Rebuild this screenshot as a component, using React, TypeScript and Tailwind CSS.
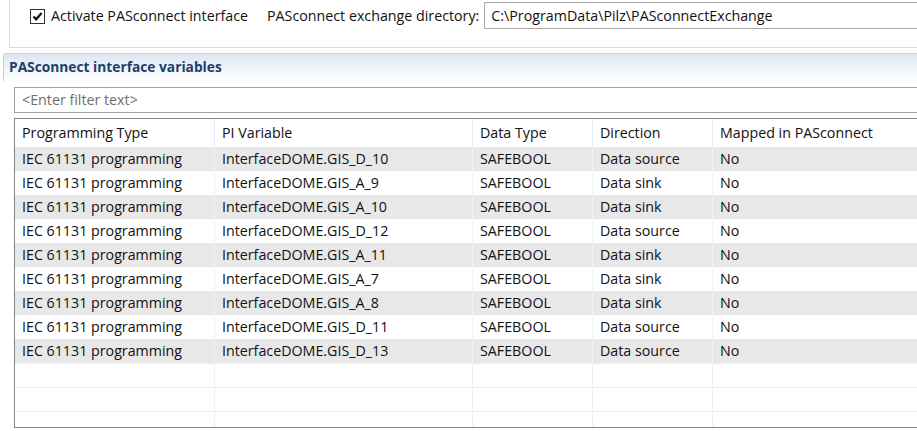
import React from "react";

type Row = {
  kind: string;
  variable: string;
  dataType: string;
  direction: string;
  mapped: string;
};

const rows: Row[] = [
  { kind: "IEC 61131 programming", variable: "InterfaceDOME.GIS_D_10", dataType: "SAFEBOOL", direction: "Data source", mapped: "No" },
  { kind: "IEC 61131 programming", variable: "InterfaceDOME.GIS_A_9", dataType: "SAFEBOOL", direction: "Data sink", mapped: "No" },
  { kind: "IEC 61131 programming", variable: "InterfaceDOME.GIS_A_10", dataType: "SAFEBOOL", direction: "Data sink", mapped: "No" },
  { kind: "IEC 61131 programming", variable: "InterfaceDOME.GIS_D_12", dataType: "SAFEBOOL", direction: "Data source", mapped: "No" },
  { kind: "IEC 61131 programming", variable: "InterfaceDOME.GIS_A_11", dataType: "SAFEBOOL", direction: "Data sink", mapped: "No" },
  { kind: "IEC 61131 programming", variable: "InterfaceDOME.GIS_A_7", dataType: "SAFEBOOL", direction: "Data sink", mapped: "No" },
  { kind: "IEC 61131 programming", variable: "InterfaceDOME.GIS_A_8", dataType: "SAFEBOOL", direction: "Data sink", mapped: "No" },
  { kind: "IEC 61131 programming", variable: "InterfaceDOME.GIS_D_11", dataType: "SAFEBOOL", direction: "Data source", mapped: "No" },
  { kind: "IEC 61131 programming", variable: "InterfaceDOME.GIS_D_13", dataType: "SAFEBOOL", direction: "Data source", mapped: "No" },
];

const headers = ["Programming Type", "PI Variable", "Data Type", "Direction", "Mapped in PASconnect"];

// column widths in px (last one fills)
const colClass = ["w-[200px]", "w-[258px]", "w-[120px]", "w-[120px]", "flex-1"];

const Checkbox: React.FC = () => (
  <div className="w-[15px] h-[15px] border border-[#333] bg-white flex items-center justify-center">
    <svg width="11" height="11" viewBox="0 0 11 11">
      <path d="M1.5 5.5 L4.2 8.3 L9.5 2" fill="none" stroke="#111" strokeWidth="2.2" />
    </svg>
  </div>
);

const App: React.FC = () => {
  return (
    <div
      className="w-[917px] h-[431px] overflow-hidden bg-white text-[14.25px] text-[#111]"
      style={{ fontFamily: '"Open Sans", "Noto Sans", sans-serif' }}
    >
      <div className="w-[940px]">
        {/* top settings panel */}
        <div className="ml-[9px] h-[48px] border-l border-b border-[#dadada] flex items-start">
          <div className="flex items-center gap-[6px] ml-[20px] mt-[8px]">
            <Checkbox />
            <span className="leading-[16px]">Activate PASconnect interface</span>
          </div>
          <span className="ml-[19px] mt-[7px] leading-[18px]">PASconnect exchange directory:</span>
          <div className="ml-[5px] mt-[2px] h-[27px] flex-1 border border-[#a9a9a9] flex items-center pl-[6px]">
            C:\ProgramData\Pilz\PASconnectExchange
          </div>
        </div>

        {/* section header */}
        <div className="mt-[5px] ml-[3px] h-[28px] rounded-tl-[3px] border-t border-l border-[#c8d0da] bg-gradient-to-b from-[#dde6f1] to-white flex items-center pl-[5px]">
          <span className="font-bold text-[#1d3f6b] text-[13.75px]">PASconnect interface variables</span>
        </div>

        {/* filter */}
        <div className="mt-[6px] ml-[14px] h-[26px] border border-[#a3a3a3] flex items-center pl-[7px] text-[#6e6e6e]">
          &lt;Enter filter text&gt;
        </div>

        {/* table */}
        <div className="mt-[5px] ml-[14px] h-[310px] border-t border-l border-b border-[#82868c] overflow-hidden">
          <div className="h-[28px] flex bg-white">
            {headers.map((h, i) => (
              <div
                key={h}
                className={`${colClass[i]} h-full flex items-center pl-[7px] ${i < 4 ? "border-r border-[#e3e9f0]" : ""}`}
              >
                {h}
              </div>
            ))}
          </div>
          {rows.map((r, ri) => (
            <div key={ri} className={`h-[24px] flex ${ri % 2 === 0 ? "bg-[#e8e8e8]" : "bg-white"}`}>
              {[r.kind, r.variable, r.dataType, r.direction, r.mapped].map((c, i) => (
                <div
                  key={i}
                  className={`${colClass[i]} h-full flex items-center pl-[7px] ${i < 4 ? "border-r border-[#f3f3f3]" : ""}`}
                >
                  {c}
                </div>
              ))}
            </div>
          ))}
          {[0, 1, 2].map((e) => (
            <div key={e} className="h-[24px] flex border-t border-[#efefef] bg-white">
              {colClass.map((cc, i) => (
                <div key={i} className={`${cc} h-full ${i < 4 ? "border-r border-[#efefef]" : ""}`} />
              ))}
            </div>
          ))}
        </div>
      </div>
    </div>
  );
};

export default App;
